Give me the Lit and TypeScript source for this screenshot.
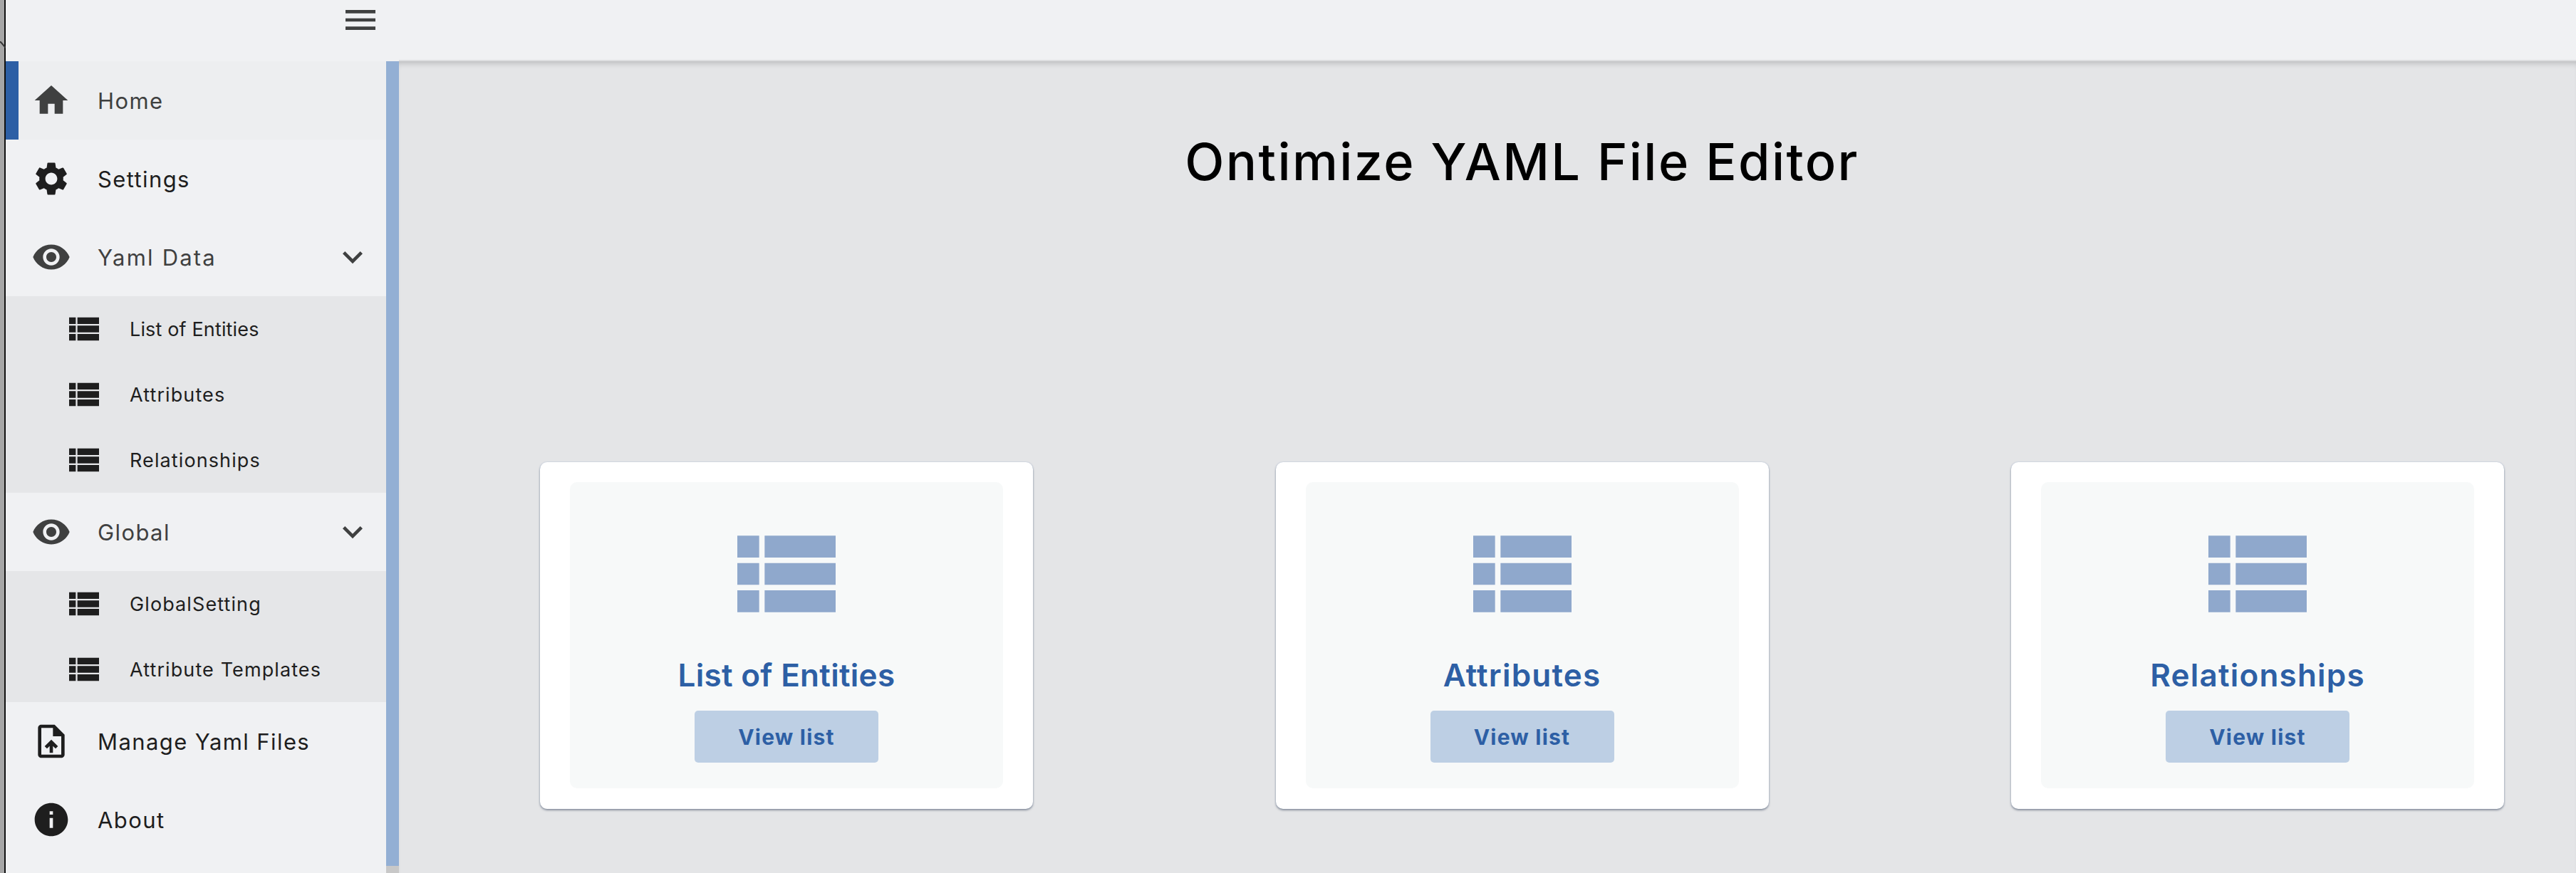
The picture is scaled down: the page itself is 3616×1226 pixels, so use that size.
import { LitElement, html, svg, css } from "lit";
import { customElement } from "lit/decorators.js";

const ICONS: Record<string, string> = {
  menu: "M3 18h18v-2H3v2zm0-5h18v-2H3v2zm0-7v2h18V6H3z",
  home: "M10 20v-6h4v6h5v-8h3L12 3 2 12h3v8z",
  settings:
    "M19.14 12.94c.04-.3.06-.61.06-.94 0-.32-.02-.64-.07-.94l2.03-1.58c.18-.14.23-.41.12-.61l-1.92-3.32c-.12-.22-.37-.29-.59-.22l-2.39.96c-.5-.38-1.03-.7-1.62-.94l-.36-2.54c-.04-.24-.24-.41-.48-.41h-3.84c-.24 0-.43.17-.47.41l-.36 2.54c-.59.24-1.13.57-1.62.94l-2.39-.96c-.22-.08-.47 0-.59.22L2.74 8.87c-.12.21-.08.47.12.61l2.03 1.58c-.05.3-.09.63-.09.94s.02.64.07.94l-2.03 1.58c-.18.14-.23.41-.12.61l1.92 3.32c.12.22.37.29.59.22l2.39-.96c.5.38 1.03.7 1.62.94l.36 2.54c.05.24.24.41.48.41h3.84c.24 0 .44-.17.47-.41l.36-2.54c.59-.24 1.13-.56 1.62-.94l2.39.96c.22.08.47 0 .59-.22l1.92-3.32c.12-.22.07-.47-.12-.61l-2.01-1.58zM12 15.6c-1.98 0-3.6-1.62-3.6-3.6s1.62-3.6 3.6-3.6 3.6 1.62 3.6 3.6-1.62 3.6-3.6 3.6z",
  eye: "M12 4.5C7 4.5 2.73 7.61 1 12c1.73 4.39 6 7.5 11 7.5s9.27-3.11 11-7.5c-1.73-4.39-6-7.5-11-7.5zM12 17c-2.76 0-5-2.24-5-5s2.24-5 5-5 5 2.24 5 5-2.24 5-5 5zm0-8c-1.66 0-3 1.34-3 3s1.34 3 3 3 3-1.34 3-3-1.34-3-3-3z",
  chevron: "M16.59 8.59 12 13.17 7.41 8.59 6 10l6 6 6-6z",
  list: "M3 14h4v-4H3v4zm0 5h4v-4H3v4zM3 9h4V5H3v4zm5 5h13v-4H8v4zm0 5h13v-4H8v4zM8 5v4h13V5H8z",
  upload:
    "M14 2H6c-1.1 0-1.99.9-1.99 2L4 20c0 1.1.89 2 1.99 2H18c1.1 0 2-.9 2-2V8l-6-6zm4 18H6V4h7v5h5v11zM8 15.01l1.41 1.41L11 14.84V19h2v-4.16l1.59 1.59L16 15.01 12.01 11 8 15.01z",
  info: "M12 2C6.48 2 2 6.48 2 12s4.48 10 10 10 10-4.48 10-10S17.52 2 12 2zm1 15h-2v-6h2v6zm0-8h-2V7h2v2z",
};

const icon = (name: string) =>
  html`<svg viewBox="0 0 24 24" fill="currentColor">${svg`<path d=${ICONS[name]} />`}</svg>`;

interface NavItem {
  label: string;
  icon: string;
  muted?: boolean;
  active?: boolean;
  children?: string[];
}

const NAV: NavItem[] = [
  { label: "Home", icon: "home", muted: true, active: true },
  { label: "Settings", icon: "settings" },
  {
    label: "Yaml Data",
    icon: "eye",
    muted: true,
    children: ["List of Entities", "Attributes", "Relationships"],
  },
  {
    label: "Global",
    icon: "eye",
    muted: true,
    children: ["GlobalSetting", "Attribute Templates"],
  },
  { label: "Manage Yaml Files", icon: "upload" },
  { label: "About", icon: "info" },
];

const CARDS = ["List of Entities", "Attributes", "Relationships"];

const tracking = (label: string) =>
  label === "List of Entities" ? "tight" : label === "Yaml Data" ? "wide" : "";

@customElement("app-root")
export class AppRoot extends LitElement {
  static styles = css`
    :host {
      display: flex;
      position: relative;
      width: 3616px;
      height: 1226px;
      overflow: hidden;
      font-family: Inter, "Noto Sans", sans-serif;
      background: #e4e5e7;
    }

    .edge {
      width: 6px;
      flex: none;
      background: #a6a6a6;
      border-right: 2px solid #111;
    }

    .cursor-mark {
      position: absolute;
      left: 0;
      top: 58px;
      width: 8px;
      height: 12px;
    }

    .shell {
      flex: 1;
      min-width: 0;
      display: flex;
      flex-direction: column;
    }

    .topbar {
      height: 84px;
      flex: none;
      background: #f0f1f3;
      display: flex;
    }

    .menu-btn {
      width: 526px;
      display: flex;
      justify-content: flex-end;
      color: #3f4040;
    }

    .menu-btn svg {
      width: 56px;
      height: 56px;
      display: block;
    }

    .body {
      flex: 1;
      min-height: 0;
      display: flex;
    }

    .side {
      width: 552px;
      flex: none;
      display: flex;
      padding-top: 2px;
      background: #f0f1f3;
    }

    nav {
      width: 534px;
      flex: none;
    }

    .row {
      height: 110px;
      display: flex;
      align-items: center;
      padding-left: 36px;
      font-size: 31px;
      font-weight: 400;
      letter-spacing: 1.4px;
      color: #1e1e1e;
      box-sizing: border-box;
    }

    .row.muted {
      color: #3f4040;
    }

    .row.active {
      background: #edeef0;
      border-left: 18px solid #2d5fa5;
      padding-left: 18px;
    }

    .row svg {
      width: 56px;
      height: 56px;
      flex: none;
      margin-right: 37px;
    }

    .row .wide {
      letter-spacing: 2.2px;
    }

    .row .caret {
      display: flex;
      margin: 0 19px 0 auto;
    }

    .row .caret svg {
      margin-right: 0;
    }

    .sub {
      background: #e5e6e8;
    }

    .sub-row {
      height: 92px;
      display: flex;
      align-items: center;
      padding-left: 82px;
      font-size: 27px;
      font-weight: 400;
      letter-spacing: 1.1px;
      color: #1e1e1e;
    }

    .sub-row .tight {
      letter-spacing: 0.15px;
    }

    .sub-row svg {
      width: 56px;
      height: 56px;
      flex: none;
      margin-right: 36px;
    }

    .scroll {
      width: 18px;
      flex: none;
      background: #c8c8c8;
    }

    .thumb {
      height: 1130px;
      background: #93afd4;
    }

    main {
      flex: 1;
      min-width: 0;
      border-top: 2px solid #dedfe1;
      box-shadow: inset 0 8px 10px -6px rgba(0, 0, 0, 0.22);
      padding: 0 101px 0 198px;
      display: flex;
      flex-direction: column;
    }

    h1 {
      margin: 91px 0 0;
      height: 100px;
      line-height: 100px;
      text-align: center;
      font-size: 72px;
      font-weight: 500;
      letter-spacing: 2.4px;
      color: #000;
    }

    .cards {
      margin-top: 372px;
      display: flex;
      justify-content: space-between;
    }

    .card {
      width: 692px;
      height: 487px;
      box-sizing: border-box;
      padding: 28px 42px 29px;
      background: #fff;
      border-radius: 10px;
      box-shadow:
        0 2px 3px rgba(70, 80, 100, 0.55),
        0 0 2px rgba(120, 150, 200, 0.45);
    }

    .card-inner {
      height: 100%;
      background: #f7f9f9;
      border-radius: 10px;
      display: flex;
      flex-direction: column;
      align-items: center;
      color: #2d5fa5;
    }

    .card-inner svg {
      width: 184px;
      height: 184px;
      margin-top: 37px;
      color: #8fa8cc;
    }

    .card-title {
      margin-top: 20px;
      height: 60px;
      line-height: 60px;
      font-size: 44px;
      font-weight: 600;
      letter-spacing: 1.2px;
    }

    .card-title.tight {
      letter-spacing: 0.3px;
    }

    .view {
      margin-top: 20px;
      width: 258px;
      height: 73px;
      display: flex;
      align-items: center;
      justify-content: center;
      border-radius: 5px;
      background: #bdcfe4;
      font-size: 30px;
      font-weight: 700;
      letter-spacing: 1.2px;
    }
  `;

  private renderItem(item: NavItem) {
    const classes = `row ${item.muted ? "muted" : ""} ${item.active ? "active" : ""}`;
    return html`
      <div class=${classes}>
        ${icon(item.icon)}
        <span class=${tracking(item.label)}>${item.label}</span>
        ${item.children ? html`<span class="caret">${icon("chevron")}</span>` : ""}
      </div>
      ${item.children
        ? html`<div class="sub">
            ${item.children.map(
              (c) =>
                html`<div class="sub-row">
                  ${icon("list")}<span class=${tracking(c)}>${c}</span>
                </div>`,
            )}
          </div>`
        : ""}
    `;
  }

  render() {
    return html`
      <div class="edge"></div>
      <svg class="cursor-mark" viewBox="0 0 8 12">
        <path d="M0 0 8 9" stroke="#333" stroke-width="2" fill="none" />
      </svg>
      <div class="shell">
        <header class="topbar">
          <div class="menu-btn">${icon("menu")}</div>
        </header>
        <div class="body">
          <div class="side">
            <nav>${NAV.map((item) => this.renderItem(item))}</nav>
            <div class="scroll"><div class="thumb"></div></div>
          </div>
          <main>
            <h1>Ontimize YAML File Editor</h1>
            <div class="cards">
              ${CARDS.map(
                (name) => html`
                  <div class="card">
                    <div class="card-inner">
                      ${icon("list")}
                      <div class="card-title ${tracking(name)}">${name}</div>
                      <div class="view">View list</div>
                    </div>
                  </div>
                `,
              )}
            </div>
          </main>
        </div>
      </div>
    `;
  }
}

declare global {
  interface HTMLElementTagNameMap {
    "app-root": AppRoot;
  }
}
